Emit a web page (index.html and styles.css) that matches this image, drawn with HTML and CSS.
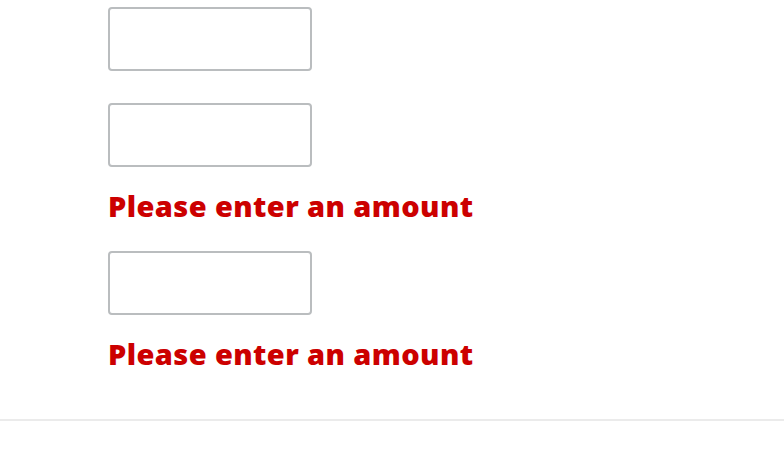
FILE: index.html
```html
<!DOCTYPE html>
<html>
<head>
<meta charset="utf-8">
<link rel="stylesheet" href="styles.css">
</head>
<body>
<div class="form">
  <div class="field">
    <input class="amount" type="text">
  </div>
  <div class="field">
    <input class="amount" type="text">
    <p class="error">Please enter an amount</p>
  </div>
  <div class="field">
    <input class="amount" type="text">
    <p class="error">Please enter an amount</p>
  </div>
</div>
<div class="divider"></div>
</body>
</html>
```
FILE: styles.css
```css
html, body {
  margin: 0;
  padding: 0;
  background: #ffffff;
}
body {
  font-family: "Open Sans", Lato, sans-serif;
}
.form {
  display: flex;
  flex-direction: column;
  gap: 32px;
  padding: 7px 0 0 108px;
}
.field {
  display: flex;
  flex-direction: column;
}
.amount {
  box-sizing: border-box;
  width: 204px;
  height: 64px;
  margin: 0;
  border: 2px solid #babdbf;
  border-radius: 4px;
  background: #fff;
  outline: none;
}
.error {
  margin: 25px 0 0;
  font-size: 29px;
  line-height: 27px;
  letter-spacing: 0.4px;
  font-weight: 800;
  color: #cc0000;
}
.divider {
  margin-top: 52px;
  height: 2px;
  background: #ebebeb;
}
```
